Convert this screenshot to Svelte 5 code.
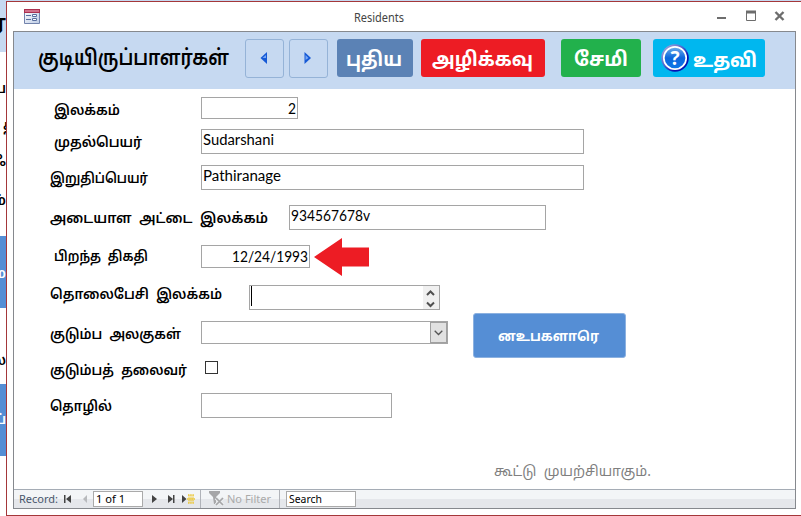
<script>
  const rows = [
    { label: 'இலக்கம்', x: 54, w: 66, base: 18, h: 32, fx: 201, fw: 97, fh: 22, value: '2', vw: 8, right: true },
    { label: 'முதல்பெயர்', x: 54, w: 88, base: 18, h: 36, fx: 201, fw: 383, fh: 25, value: 'Sudarshani', vw: 71 },
    { label: 'இறுதிப்பெயர்', x: 50, w: 98, base: 18, h: 40, fx: 201, fw: 383, fh: 25, value: 'Pathiranage', vw: 78 },
    { label: 'அடையாள அட்டை இலக்கம்', x: 50, w: 218, base: 18, h: 40, fx: 289, fw: 257, fh: 25, value: '934567678v', vw: 79 },
    { label: 'பிறந்த திகதி', x: 54, w: 94, base: 16, h: 40, fx: 201, fw: 109, fh: 23, value: '12/24/1993', vw: 76, right: true, arrow: true },
    { label: 'தொலைபேசி இலக்கம்', x: 50, w: 172, base: 14, h: 36, fx: 249, fw: 191, fh: 25, kind: 'spin' },
    { label: 'குடும்ப அலகுகள்', x: 50, w: 131, base: 18, h: 40, fx: 201, fw: 247, fh: 23, kind: 'combo' },
    { label: 'குடும்பத் தலைவர்', x: 50, w: 137, base: 14, h: 32, fx: 205, fw: 13, fh: 13, kind: 'check' },
    { label: 'தொழில்', x: 50, w: 62, base: 18, h: 30, fx: 201, fw: 191, fh: 25 }
  ];
  const shards = [
    { t: 'ர', h: 52, c: 'head', pad: 10 },
    { t: 'ப', h: 64, c: '', pad: 29 },
    { t: 'த', h: 34, c: 'start', pad: 2 },
    { t: 'ஃ', h: 36, c: '', pad: 4 },
    { t: 'ம்', h: 50, c: '', pad: 7 },
    { t: 'ம', h: 72, c: 'tile', pad: 30 },
    { t: 'ல', h: 76, c: '', pad: 45 },
    { t: 'ப்', h: 72, c: 'tile', pad: 28 },
    { t: '', h: 60, c: '', pad: 0 }
  ];
</script>

{#snippet line(text, w, size, base, cls)}
  <svg class="line {cls}" width={w} height={base + 4}>
    <text x="0" y={base} font-size={size} textLength={w} lengthAdjust="spacingAndGlyphs">{text}</text>
  </svg>
{/snippet}

<div class="screen">
  <div class="behind">
    {#each shards as s}
      <div class="shard {s.c}" style="height:{s.h}px;padding-top:{s.pad}px"><span>{s.t}</span></div>
    {/each}
  </div>
  <div class="window">
    <header class="titlebar">
      <svg class="formicon" width="16" height="15" viewBox="0 0 16 15">
        <defs><linearGradient id="fi" x1="0" y1="0" x2="1" y2="1"><stop offset="0" stop-color="#fff" /><stop offset="1" stop-color="#bccbe5" /></linearGradient></defs>
        <path d="M.5.5h15v14H.5z" fill="url(#fi)" stroke="#7283ac" />
        <path d="M0 0h16v4H0z" fill="#aa3150" /><path d="M1 1h14v2H1z" fill="#d0708a" />
        <path d="M2 6.500h5M2 10.500h5" stroke="#586f9f" />
        <path d="M8.500 5.500h4v2h-4zM8.500 9.500h4v2h-4z" fill="#fff" stroke="#586f9f" />
      </svg>
      <div class="title">{@render line('Residents', 50, 12, 13, 'ui')}</div>
      <svg class="controls" width="70" height="14" viewBox="0 0 70 14" fill="none" stroke="#6d6d6d">
        <path d="M0 8h9" stroke-width="2" />
        <path d="M29.500 1.500h9v9h-9z" /><path d="M29 2h10" stroke-width="3" />
        <path d="M58.500 2l8 8M66.500 2l-8 8" stroke-width="2.400" />
      </svg>
    </header>
    <main class="frame">
      <div class="banner">
        <div class="heading">{@render line('குடியிருப்பாளர்கள்', 191, 21.5, 33, 'ta semi')}</div>
        <button class="nav first" aria-label="Previous">
          <svg width="8" height="12" viewBox="0 0 8 12"><path d="M7 0v12L.5 6z" fill="#1559d6" /><path d="M6 3v3H2.500z" fill="#78a8f5" /></svg>
        </button>
        <button class="nav" aria-label="Next">
          <svg width="8" height="12" viewBox="0 0 8 12"><path d="M.5 0v12L7 6z" fill="#1559d6" /><path d="M1.500 3v5l3-2z" fill="#78a8f5" /></svg>
        </button>
        <button class="act new">{@render line('புதிய', 56, 20, 27, 'ta bold')}</button>
        <button class="act del">{@render line('அழிக்கவு', 101, 19.5, 27, 'ta bold')}</button>
        <button class="act save">{@render line('சேமி', 54, 20, 27, 'ta bold')}</button>
        <button class="act help">
          <svg class="q" width="28" height="28" viewBox="0 0 28 28">
            <defs>
              <linearGradient id="ring" x1="0" y1="0" x2="1" y2="1"><stop offset="0" stop-color="#b8b4dc" /><stop offset=".45" stop-color="#4a62cf" /><stop offset=".7" stop-color="#0312b4" /></linearGradient>
              <linearGradient id="ball" x1="0" y1="0" x2="0" y2="1"><stop offset="0" stop-color="#70aeea" /><stop offset=".5" stop-color="#0b66dc" /><stop offset="1" stop-color="#0d79e8" /></linearGradient>
            </defs>
            <circle cx="14" cy="14" r="13.800" fill="url(#ring)" />
            <circle cx="14" cy="14" r="11.200" fill="url(#ball)" stroke="#fff" stroke-width="1.700" />
            <text x="14" y="20.500" text-anchor="middle" class="mark">?</text>
          </svg>
          {@render line('உதவி', 64, 20, 28, 'ta bold')}
        </button>
      </div>

      <div class="body">
        <div class="fields">
          {#each rows as r}
            <div class="row" style="height:{r.h}px">
              <div class="label" style="width:{r.fx - 14}px;padding-left:{r.x - 14}px">
                {@render line(r.label, r.w, 14, r.base, 'ta semi gap')}
              </div>
              {#if r.kind === 'check'}
                <div class="check"></div>
              {:else}
                <div class="field" class:right={r.right} style="width:{r.fw}px;height:{r.fh}px">
                  {#if r.value}{@render line(r.value, r.vw, 15.5, r.right ? 16 : 15, 'lato')}{/if}
                  {#if r.kind === 'spin'}
                    <i class="caret"></i>
                    <svg class="spin" width="16" height="23" viewBox="0 0 16 23" fill="none" stroke="#505050" stroke-width="2">
                      <path d="M0 0h16v23H0z" fill="#f0f0f0" stroke="none" />
                      <path d="M4 9l3.500-3.500L11 9M4 16.500L7.500 20l3.500-3.500" />
                    </svg>
                  {:else if r.kind === 'combo'}
                    <div class="drop"><svg width="9" height="6" viewBox="0 0 9 6"><path d="M.7.800l3.800 3.700L8.300.800" fill="none" stroke="#555" stroke-width="1.300" /></svg></div>
                  {/if}
                </div>
              {/if}
              {#if r.arrow}
                <svg class="arrow" width="56" height="38" viewBox="0 0 56 38"><path d="M0 19L28 0v9.500h27v19H28V38z" fill="#ed1c24" /></svg>
              {/if}
            </div>
          {/each}
        </div>
        <aside>
          <button class="member">{@render line('னஉபகளாரெ', 101, 13.5, 27, 'ta bold')}</button>
          <div class="note">{@render line('கூட்டு முயற்சியாகும்.', 157, 14, 19, 'ta grey gap')}</div>
        </aside>
      </div>

      <footer>
        <div class="rec">{@render line('Record:', 39, 11, 13, 'ui slate')}</div>
        <svg class="steps" width="30" height="17" viewBox="0 0 30 17">
          <path d="M0 5h1.500v8H0zM7 5v8L2 9z" fill="#444" /><path d="M23 5v8l-4-4z" fill="#b8babd" />
        </svg>
        <div class="mini count">{@render line('1 of 1', 29, 11, 11, 'ui')}</div>
        <svg class="more" width="46" height="17" viewBox="0 0 46 17">
          <path d="M1 5v8l5-4zM17 5v8l5-4zM22 5h1.500v8H22zM31 5v8l4.500-4z" fill="#444" />
          <path d="M37 5h6M36 9h8M37 13h6M38 5v8M42 5v8M40 5v8" stroke="#ecc83a" stroke-width="1.300" stroke-dasharray="1.500 .7" />
        </svg>
        <div class="filter">
          <svg width="17" height="16" viewBox="0 0 17 16"><path d="M1 1h11v2L8 7v7H6L5 7 1 3z" fill="#a6a6a8" /><path d="M8 8l7 7M15 8l-7 7" stroke="#eceef0" stroke-width="3.500" /><path d="M8 8l7 7M15 8l-7 7" stroke="#a6a6a8" stroke-width="1.700" /></svg>
          {@render line('No Filter', 44, 11, 13, 'ui pale')}
        </div>
        <div class="mini search">{@render line('Search', 33, 11, 11, 'ui')}</div>
      </footer>
    </main>
  </div>
</div>

<style>
  :global(body) { margin: 0; background: #fff; }
  .screen { width: 801px; height: 516px; display: flex; overflow: hidden; background: linear-gradient(#c6d9f1 1px, #fff 1px); box-sizing: border-box; }
  .behind { width: 6px; overflow: hidden; flex: none; }
  .shard { box-sizing: border-box; display: flex; justify-content: flex-end; overflow: hidden; font: 600 14px/18px "Noto Sans Tamil", "Noto Sans", sans-serif; color: #000; }
  .shard.head { background: #c6d9f1; font-size: 23px; line-height: 32px; }
  .shard.tile { background: #558ed5; color: #fff; }
  .shard.start { justify-content: flex-start; padding-left: 3px; }
  .window { box-sizing: border-box; width: 795px; height: 515px; margin-top: 1px; border: 1px solid #a4373a; border-right: 0; background: #fff; padding: 0 5px 0 6px; flex: none; }
  .titlebar { height: 29px; display: flex; align-items: flex-start; }
  .formicon { margin: 7px 0 0 11px; }
  .title { margin: 7px 0 0 314px; }
  .controls { margin: 8px 0 0 313px; }
  .frame { box-sizing: border-box; width: 783px; height: 478px; border: 1px solid #86898e; display: flex; flex-direction: column; }
  .line { display: block; overflow: visible; flex: none; fill: #000; }
  .ta { font-family: "Noto Sans Tamil", "Noto Sans", sans-serif; }
  .semi { font-weight: 600; }
  .gap { word-spacing: 4px; }
  .bold { font-weight: 700; fill: #fff; }
  .lato { font-family: Lato, sans-serif; }
  .ui { font-family: "Noto Sans", "Open Sans", sans-serif; }
  .title .ui { fill: #444; }
  .slate { fill: #48566b; }
  .pale { fill: #aaa; }
  .grey { fill: #7f7f7f; }
  button { border: 0; padding: 0; margin: 0; box-sizing: border-box; border-radius: 3px; display: flex; flex: none; }
  .banner { height: 57px; background: #c6d9f1; display: flex; padding-left: 24px; flex: none; }
  .heading { width: 207px; }
  .nav { width: 39px; height: 39px; margin: 7px 5px 0 0; border: 1px solid #95b3d7; background: transparent; align-items: center; justify-content: center; padding: 0 2px 2px 0; }
  .act { height: 38px; margin-top: 7px; }
  .new { width: 76px; background: #5b82b5; margin-left: 4px; padding-left: 9px; }
  .del { width: 124px; background: #ed1c24; margin-left: 8px; padding-left: 11px; }
  .save { width: 80px; background: #22b14c; margin-left: 16px; padding-left: 13px; }
  .help { width: 112px; background: #00b7ef; margin-left: 12px; padding-left: 8px; gap: 4px; }
  .q { margin-top: 5px; }
  .mark { font: 700 19px "Noto Sans", sans-serif; fill: #fff; }
  .body { flex: 1; display: flex; min-height: 0; }
  .fields { padding-top: 8px; width: 459px; flex: none; }
  .row { display: flex; align-items: flex-start; width: 600px; }
  .label { box-sizing: border-box; flex: none; }
  .field { box-sizing: border-box; border: 1px solid #a5a5a5; background: #fff; display: flex; padding-left: 1px; flex: none; }
  .field.right { justify-content: flex-end; padding-right: 1px; }
  .check { box-sizing: border-box; width: 13px; height: 13px; border: 1px solid #333; }
  .caret { width: 1px; height: 20px; background: #000; }
  .spin { margin-left: auto; }
  .drop { box-sizing: border-box; margin-left: auto; width: 17px; height: 21px; border: 1px solid #a0a0a0; background: #e1e1e1; display: flex; align-items: center; justify-content: center; }
  .arrow { margin: -7px 0 0 4px; }
  aside { padding-top: 224px; }
  .member { width: 153px; height: 45px; background: #558ed5; border: 1px solid #8cb1e0; padding-left: 24px; }
  .note { margin: 99px 0 0 21px; }
  footer { height: 19px; flex: none; box-sizing: border-box; border-top: 1px solid #a5acb5; background: linear-gradient(#f3f5f7 50%, #e5e7eb 50%); display: flex; padding-left: 5px; }
  .steps { margin-left: 6px; }
  .mini { box-sizing: border-box; background: #fff; border: 1px solid #aaa; height: 16px; margin-top: 1px; padding-left: 2px; }
  .count { width: 50px; margin-left: -1px; }
  .more { margin-left: 8px; }
  .filter { width: 80px; box-sizing: border-box; margin-left: 3px; border: solid #b0b3b9; border-width: 0 1px; display: flex; padding: 0 0 0 7px; gap: 2px; }
  .search { width: 70px; margin-left: 6px; }
</style>
